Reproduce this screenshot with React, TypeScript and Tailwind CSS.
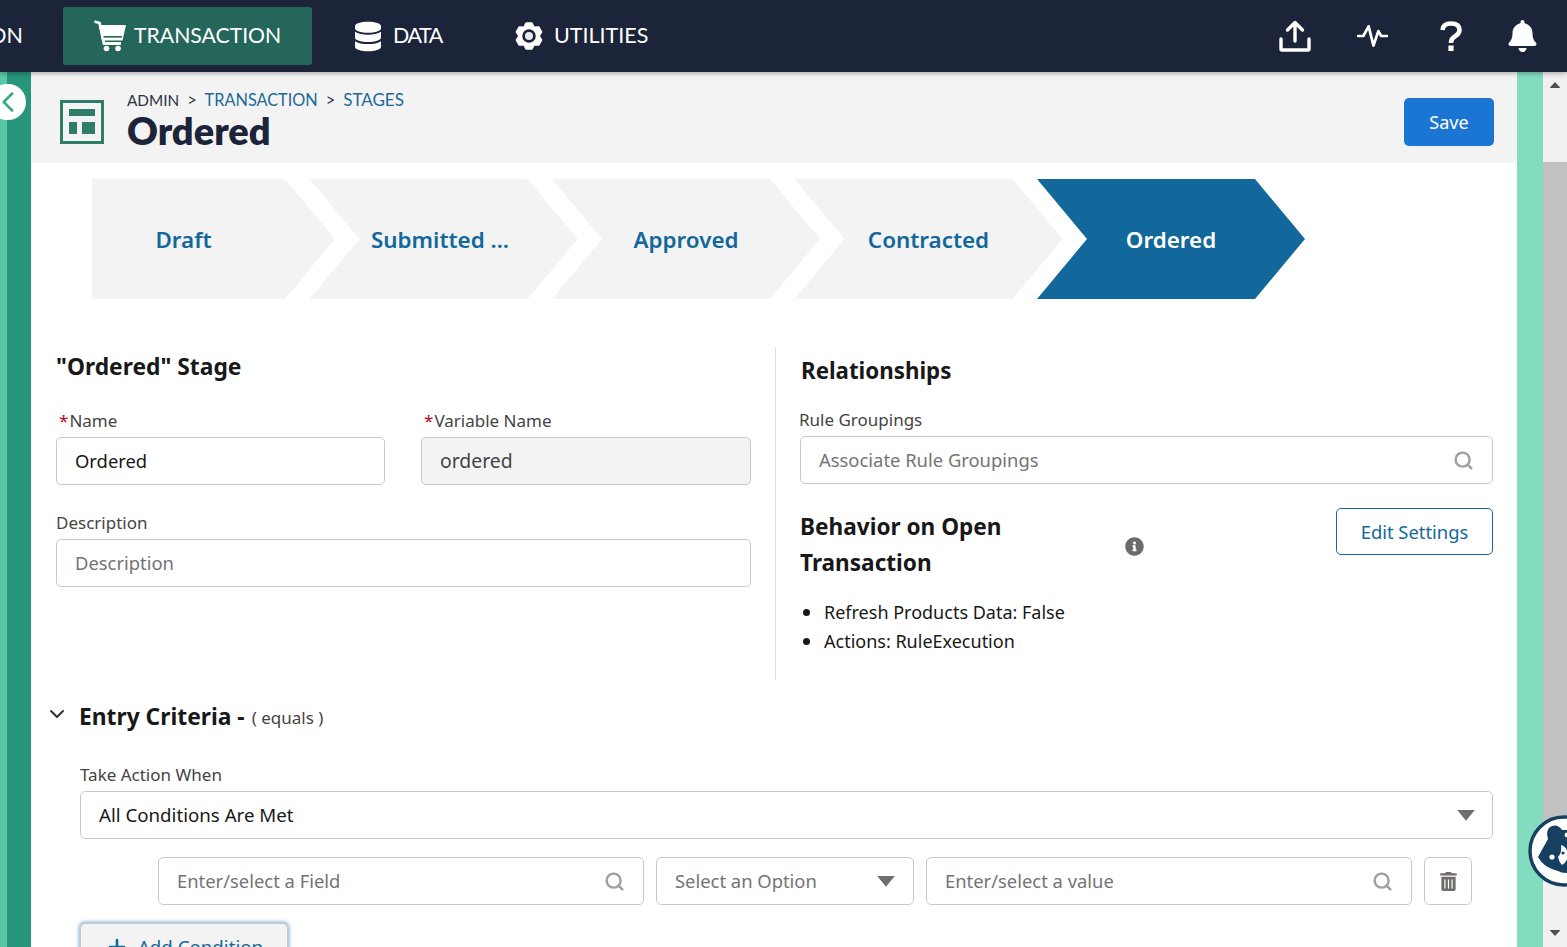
import { ChevronDown, ChevronLeft, Plus, Search } from 'lucide-react';
import { FaBell, FaDatabase, FaInfoCircle, FaTrashAlt } from 'react-icons/fa';

const SANS = "font-['Noto_Sans','Open_Sans',sans-serif]";

function CartIcon() {
  return (
    <svg viewBox="0 0 32 32" className="w-[32px] h-[32px]" fill="white">
      <path d="M0.5 1.5 L5.5 3 L10 23.5 H27" fill="none" stroke="white" strokeWidth="2.8" />
      <path d="M5 5 H32 L28.5 20.5 H8 Z" />
      <rect x="9.5" y="16" width="18.5" height="1.6" fill="#25665a" />
      <circle cx="12.5" cy="28.5" r="2.8" />
      <circle cx="24" cy="28.5" r="2.8" />
    </svg>
  );
}

// six lobes around the middle, pointing straight up and down
function gearPath() {
  const pts: string[] = [];
  for (let k = 0; k < 6; k++) {
    const a = 90 + k * 60;
    [[a - 30, 9.8], [a - 12, 13], [a + 12, 13]].forEach(([deg, r]) => {
      const rad = (deg * Math.PI) / 180;
      pts.push(`${(14 + r * Math.cos(rad)).toFixed(2)} ${(15 - r * Math.sin(rad)).toFixed(2)}`);
    });
  }
  return 'M' + pts.join(' L') + ' Z';
}

function GearIcon() {
  return (
    <svg viewBox="0 0 28 30" className="w-[28px] h-[30px]">
      <path d={gearPath()} fill="white" stroke="white" strokeWidth="2" strokeLinejoin="round" />
      <circle cx="14" cy="15" r="5.4" fill="#e8eaee" stroke="#1b2438" strokeWidth="2.8" />
    </svg>
  );
}

function UploadIcon() {
  return (
    <svg viewBox="0 0 32 32" className="w-[32px] h-[32px]" fill="none" stroke="white" strokeWidth="3.4" strokeLinecap="round" strokeLinejoin="round">
      <path d="M16 21 V3 M8.5 10 L16 2.5 L23.5 10" />
      <path d="M2 19 V29 Q2 30 3 30 H29 Q30 30 30 29 V19" />
    </svg>
  );
}

function PulseIcon() {
  return (
    <svg viewBox="0 0 32 24" className="w-[31px] h-[24px] -ml-[2px]" fill="none" stroke="white" strokeWidth="2.8" strokeLinecap="round" strokeLinejoin="round">
      <path d="M1 12 H6.5 L12 2 L17 22 L22 7 L25 12 H31" />
    </svg>
  );
}

function QuestionIcon() {
  return (
    <svg viewBox="0 0 22 30" className="w-[22px] h-[30px]" fill="none" stroke="white" strokeWidth="4.6">
      <path d="M2.5 9 Q3 2.5 11 2.5 Q19.5 2.5 19.5 9 Q19.5 12.5 15.5 15 Q11 17.5 11 21.5 V22" />
      <rect x="8.4" y="24.5" width="5.2" height="5.5" fill="white" stroke="none" />
    </svg>
  );
}

function StageIcon() {
  return (
    <svg viewBox="0 0 46 46" className="w-[46px] h-[46px] shrink-0 mt-[9px]">
      <rect x="2.5" y="2.5" width="41" height="41" fill="none" stroke="#2d7d68" strokeWidth="3" />
      <rect x="10" y="10" width="26" height="7" fill="#2d7d68" />
      <rect x="10" y="23" width="8" height="12" fill="#2d7d68" />
      <rect x="23" y="23" width="13" height="12" fill="#2d7d68" />
    </svg>
  );
}

function BearLogo() {
  return (
    <svg viewBox="0 0 72 72" className="w-[72px] h-[72px]">
      <circle cx="36" cy="36" r="34" fill="white" stroke="#173f5f" strokeWidth="3.4" />
      <path d="M10 42 L20 24 Q17 14 24 11 Q30 9 34 15 L50 15 V56 Q36 60 30 56 Q15 52 10 42 Z" fill="#173f5f" />
      <circle cx="24" cy="42" r="2.6" fill="white" />
      <circle cx="39" cy="20" r="2.4" fill="white" />
      <path d="M30 42 Q34 38 33 30 Q40 32 40 42 Q38 48 34 50 Q31 47 30 42 Z" fill="white" />
      <circle cx="35" cy="38" r="1.6" fill="#173f5f" />
    </svg>
  );
}

function Stage({ label, active, first, className }: { label: string; active?: boolean; first?: boolean; className?: string }) {
  return (
    <div
      className={`h-[120px] pt-[2px] flex items-center justify-center font-semibold text-[22.4px] ${first ? 'w-[243px] pr-[60px] [clip-path:polygon(0_0,193px_0,243px_50%,193px_100%,0_100%)]' : 'w-[268px] -ml-[25.5px] [clip-path:polygon(0_0,218px_0,268px_50%,218px_100%,0_100%,50px_50%)]'} ${active ? 'bg-[#12689b] text-white' : 'bg-[#f3f3f3] text-[#12689b]'} ${className ?? ''}`}
    >
      {label}
    </div>
  );
}

function Label({ children, required }: { children: string; required?: boolean }) {
  return (
    <div className="h-[24px] text-[17px] leading-[24px] text-[#444444]">
      {required && <span className="text-[#ba0517] mr-[1px] ml-[3px]">*</span>}
      {children}
    </div>
  );
}

function Field({ value, placeholder, disabled, search, className }: { value?: string; placeholder?: string; disabled?: boolean; search?: boolean; className?: string }) {
  return (
    <div className={`h-[48px] rounded-[5px] border border-[#c9c9c9] px-[18px] flex items-center justify-between ${disabled ? 'bg-[#f3f3f3] text-[#444444] text-[19.4px]' : 'bg-white text-[18.4px]'} ${value && !disabled ? 'text-[#181818]' : ''} ${!value ? 'text-[#747474]' : ''} ${className ?? ''}`}>
      <span>{value ?? placeholder}</span>
      {search && <Search className="w-[21px] h-[21px] text-[#a0a0a0]" strokeWidth={2.8} />}
    </div>
  );
}

function Caret() {
  return <div className="w-[18px] h-[11px] bg-[#706e6b] [clip-path:polygon(0_0,100%_0,50%_100%)]" />;
}

function Bullet({ children }: { children: string }) {
  return (
    <li className="flex items-center h-[29px]">
      <span className="w-[7px] h-[7px] rounded-full bg-[#181818] ml-[3px] mr-[14px] shrink-0" />
      {children}
    </li>
  );
}

export default function App() {
  return (
    <div className={`h-[947px] w-full overflow-hidden flex flex-col relative bg-white ${SANS}`}>
      {/* top nav */}
      <div className="h-[72px] shrink-0 bg-[#1b2438] flex items-center text-white relative z-10 shadow-[0_2px_4px_rgba(0,0,0,0.25)] font-['Lato',sans-serif] text-[21.5px]">
        <div className="w-[63px] overflow-hidden flex justify-end pr-[40px] shrink-0 -mt-[2px]">
          <span>ON</span>
        </div>
        <div className="w-[249px] h-[58px] bg-[#25665a] rounded-[3px] flex items-center pl-[31px] gap-[8px]">
          <CartIcon />
          <span className="text-[21.2px]">TRANSACTION</span>
        </div>
        <div className="flex items-center gap-[12px] ml-[43px]">
          <FaDatabase className="w-[26px] h-[31px]" />
          <span className="w-[50px] tracking-[-1.5px] -mt-[2px]">DATA</span>
        </div>
        <div className="flex items-center gap-[11px] ml-[72px]">
          <GearIcon />
          <span className="-mt-[2px]">UTILITIES</span>
        </div>
        <div className="ml-auto flex items-center mr-[12px]">
          <div className="w-[78px] flex justify-center"><UploadIcon /></div>
          <div className="w-[78px] flex justify-center"><PulseIcon /></div>
          <div className="w-[78px] flex justify-center"><QuestionIcon /></div>
          <div className="w-[65px] flex justify-center"><FaBell className="w-[31px] h-[32px]" /></div>
        </div>
      </div>

      <div className="flex-1 flex min-h-0">
        {/* left strip */}
        <div className="w-[7px] shrink-0 bg-[#5ac6a6]" />
        <div className="w-[24px] shrink-0 bg-[#28967a]" />

        {/* main card */}
        <div className="w-[1486px] shrink-0 bg-white flex flex-col">
          <div className="h-[91px] shrink-0 bg-[#f3f3f3] flex items-center pl-[28px] pr-[23px]">
            <StageIcon />
            <div className="ml-[22px] flex-1 mt-[5px]">
              <div className="font-['Lato',sans-serif] text-[16.3px] leading-[20px] flex items-center gap-[8px] text-[#2b3242]">
                <span className="text-[15.3px]">ADMIN</span>
                <span>&gt;</span>
                <span className="text-[#1b6a96]">TRANSACTION</span>
                <span>&gt;</span>
                <span className="text-[#1b6a96] text-[17px]">STAGES</span>
              </div>
              <div className="font-['Lato',sans-serif] font-extrabold text-[38px] leading-[42px] -mt-[1px] text-[#1b2438]">Ordered</div>
            </div>
            <div className="w-[90px] h-[48px] mt-[9px] rounded-[5px] bg-[#1b76d3] text-white text-[18px] flex items-center justify-center">Save</div>
          </div>

          <div className="flex mt-[16px] ml-[61px] shrink-0">
            <Stage label="Draft" first />
            <Stage label="Submitted ..." className="pr-[7px]" />
            <Stage label="Approved" />
            <Stage label="Contracted" />
            <Stage label="Ordered" active />
          </div>

          <div className="flex mt-[48px] h-[333px] shrink-0">
            <div className="w-[745px] border-r border-[#dddddd] pl-[25px] pr-[24px]">
              <div className="h-[40px] text-[22.8px] font-bold leading-[40px] text-[#181818]">"Ordered" Stage</div>
              <div className="grid grid-cols-[329px_330px] gap-x-[36px] mt-[22px]">
                <div>
                  <Label required>Name</Label>
                  <Field value="Ordered" className="mt-[4px]" />
                </div>
                <div>
                  <Label required>Variable Name</Label>
                  <Field value="ordered" disabled className="mt-[4px]" />
                </div>
              </div>
              <div className="mt-[26px]">
                <Label>Description</Label>
                <Field placeholder="Description" className="mt-[4px]" />
              </div>
            </div>
            <div className="w-[717px] pl-[24px]">
              <div className="h-[50px] pl-[1px] text-[22.3px] font-bold leading-[48px] text-[#181818]">Relationships</div>
              <div className="mt-[11px] -ml-[1px]"><Label>Rule Groupings</Label></div>
              <Field placeholder="Associate Rule Groupings" search className="mt-[4px]" />
              <div className="flex mt-[24px]">
                <div className="w-[325px] pt-[1px] text-[22.6px] font-bold leading-[36px] text-[#181818]">Behavior on Open Transaction</div>
                <FaInfoCircle className="w-[19px] h-[19px] text-[#6b6b6b] mt-[29px]" />
                <div className="ml-auto w-[157px] h-[47px] rounded-[5px] border border-[#12689b] text-[#12689b] text-[18.4px] flex items-center justify-center">Edit Settings</div>
              </div>
              <ul className="mt-[17px] text-[18px] text-[#181818]">
                <Bullet>Refresh Products Data: False</Bullet>
                <Bullet>Actions: RuleExecution</Bullet>
              </ul>
            </div>
          </div>

          <div className="flex items-center mt-[20px] pl-[14px] shrink-0">
            <ChevronDown className="w-[24px] h-[24px] text-[#333333] -mt-[6px]" strokeWidth={2} />
            <div className="ml-[10px] text-[22.8px] font-bold text-[#181818]">Entry Criteria -</div>
            <div className="ml-[7px] mt-[2px] text-[17px] text-[#444444]">( equals )</div>
          </div>

          <div className="pl-[49px] pr-[24px] mt-[29px] shrink-0">
            <Label>Take Action When</Label>
            <div className="mt-[4px] h-[48px] rounded-[5px] border border-[#c9c9c9] pl-[18px] pr-[17px] flex items-center justify-between text-[18.7px] text-[#181818]">
              <span>All Conditions Are Met</span>
              <Caret />
            </div>
            <div className="flex gap-[12px] ml-[78px] mt-[18px] mr-[21px]">
              <Field placeholder="Enter/select a Field" search className="w-[486px]" />
              <div className="w-[258px] h-[48px] rounded-[5px] border border-[#c9c9c9] px-[18px] flex items-center justify-between text-[18.4px] text-[#747474]">
                <span>Select an Option</span>
                <Caret />
              </div>
              <Field placeholder="Enter/select a value" search className="w-[486px]" />
              <div className="w-[48px] h-[48px] rounded-[5px] border border-[#c9c9c9] flex items-center justify-center">
                <FaTrashAlt className="w-[17px] h-[19px] text-[#706e6b]" />
              </div>
            </div>
            <div className="mt-[18px] w-[208px] h-[48px] rounded-[5px] border border-[#c9c9c9] bg-[#f3f3f3] shadow-[0_0_3px_2px_#a9c9e6] flex items-center justify-center gap-[9px] text-[18.7px] text-[#12689b]">
              <Plus className="w-[24px] h-[24px]" strokeWidth={2.6} />
              <span>Add Condition</span>
            </div>
          </div>
        </div>

        {/* right strip */}
        <div className="w-[26px] shrink-0 bg-[#84dcc0]" />

        {/* scrollbar */}
        <div className="flex-1 bg-[#f1f1f1] flex flex-col items-center">
          <div className="h-[90px] w-full flex justify-center pt-[10px] shrink-0">
            <div className="w-[11px] h-[6px] bg-[#505050] [clip-path:polygon(50%_0,100%_100%,0_100%)]" />
          </div>
          <div className="w-full h-[690px] bg-[#c1c1c1] shrink-0" />
          <div className="mt-auto mb-[11px] w-[11px] h-[6px] bg-[#505050] [clip-path:polygon(0_0,100%_0,50%_100%)]" />
        </div>
      </div>

      {/* sidebar toggle */}
      <div className="absolute left-[-11px] top-[84px] w-[37px] h-[36px] rounded-full bg-white flex items-center justify-start pl-[2px] z-20">
        <ChevronLeft className="w-[34px] h-[34px] text-[#35a98a] shrink-0" strokeWidth={1.8} />
      </div>

      {/* floating help badge */}
      <div className="absolute left-[1528px] top-[815px] z-20">
        <BearLogo />
      </div>
    </div>
  );
}
